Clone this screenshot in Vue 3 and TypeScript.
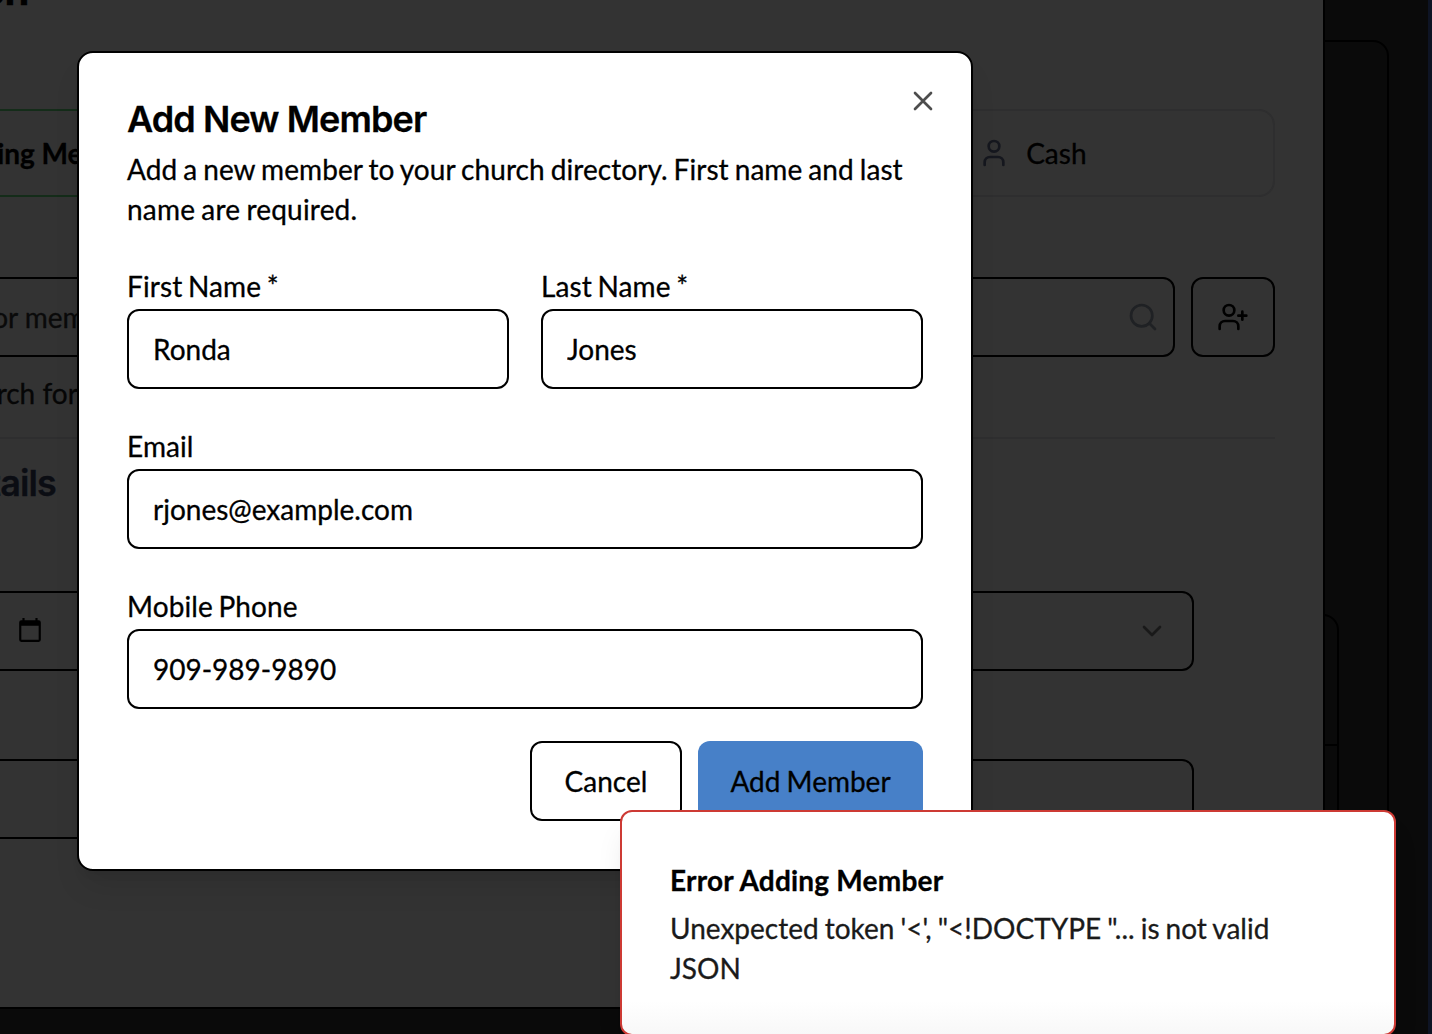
<script setup lang="ts">
import { ref } from 'vue'

const firstName = ref('Ronda')
const lastName = ref('Jones')
const email = ref('rjones@example.com')
const phone = ref('909-989-9890')
</script>

<template>
  <div class="screen">
    <div class="page-card">
      <div class="page-panel"><div class="panel-head"></div></div>
    </div>
    <div class="page-edge"></div>

    <section class="sheet">
      <h1 class="sheet-title">Add Donation</h1>
      <div class="tabs">
        <div class="tab active">
          <svg class="icon" viewBox="0 0 24 24"><circle cx="12" cy="7" r="4" /><path d="M19 21v-2a4 4 0 0 0-4-4H9a4 4 0 0 0-4 4v2" /></svg>
          <span>Existing Member</span>
        </div>
        <div class="tab"></div>
        <div class="tab cash">
          <svg class="icon muted" viewBox="0 0 24 24"><circle cx="12" cy="7" r="4" /><path d="M19 21v-2a4 4 0 0 0-4-4H9a4 4 0 0 0-4 4v2" /></svg>
          <span>Cash</span>
        </div>
      </div>
      <div class="search-row">
        <div class="box search">
          <span class="placeholder">Type to search for member</span>
          <svg class="icon faint" viewBox="0 0 24 24"><circle cx="11" cy="11" r="8" /><path d="m21 21-4.3-4.3" /></svg>
        </div>
        <button class="box add" aria-label="Add member">
          <svg class="icon" viewBox="0 0 24 24"><path d="M16 21v-2a4 4 0 0 0-4-4H6a4 4 0 0 0-4 4v2" /><circle cx="9" cy="7" r="4" /><path d="M19 8v6M22 11h-6" /></svg>
        </button>
      </div>
      <p class="hint">Type a name to search for</p>
      <div class="rule"></div>
      <h2 class="section-title">Donation Details</h2>
      <div class="fields">
        <div class="box date">
          <svg class="calendar" viewBox="0 0 24 24"><path d="M20 3h-1V1h-2v2H7V1H5v2H4a2 2 0 0 0-2 2v16a2 2 0 0 0 2 2h16a2 2 0 0 0 2-2V5a2 2 0 0 0-2-2zm0 18H4V8h16z" /></svg>
        </div>
        <div class="box select">
          <svg class="icon chevron" viewBox="0 0 24 24"><path d="m6 9 6 6 6-6" /></svg>
        </div>
        <div class="box"></div>
        <div class="box"></div>
      </div>
    </section>

    <form class="modal" @submit.prevent>
      <h2 class="modal-title">Add New Member</h2>
      <p class="modal-text">Add a new member to your church directory. First name and last <span class="wide">name are required.</span></p>
      <div class="name-row">
        <label class="field">First Name *<input v-model="firstName" type="text" /></label>
        <label class="field">Last Name *<input v-model="lastName" type="text" /></label>
      </div>
      <label class="field">Email<input v-model="email" type="text" /></label>
      <label class="field">Mobile Phone<input v-model="phone" type="text" /></label>
      <div class="actions">
        <button type="button" class="btn cancel">Cancel</button>
        <button type="submit" class="btn primary">Add Member</button>
      </div>
      <svg class="icon close" viewBox="0 0 24 24"><path d="M18 6 6 18M6 6l12 12" /></svg>
    </form>

    <aside class="toast">
      <strong>Error Adding Member</strong>
      <p>Unexpected token '&lt;', "&lt;!DOCTYPE "... is not valid JSON</p>
    </aside>
  </div>
</template>

<style>
body { margin: 0; overflow: hidden; }
</style>

<style scoped>
* { box-sizing: border-box; }
.screen {
  position: relative;
  width: 1432px;
  height: 1034px;
  overflow: hidden;
  background: #0a0a0a;
  color: #000;
  font: 400 28px/40px Lato, sans-serif;
  -webkit-text-stroke: 0.3px currentColor;
}
h1, h2, p { margin: 0; }
.icon {
  width: 32px;
  height: 32px;
  flex: none;
  fill: none;
  stroke: currentColor;
  stroke-width: 2;
  stroke-linecap: round;
  stroke-linejoin: round;
}

.page-card {
  position: absolute;
  left: -300px;
  top: 40px;
  width: 1689px;
  height: 1100px;
  padding: 572px 48px 0;
  border: 2px solid #000;
  border-radius: 16px;
}
.page-panel { height: 600px; border: 2px solid #000; border-radius: 16px; }
.panel-head { height: 130px; border-bottom: 2px solid #000; }
.page-edge { position: absolute; right: 0; top: 0; width: 4px; height: 100%; background: #0e1424; }

.sheet {
  position: absolute;
  left: -275px;
  top: -48px;
  width: 1600px;
  height: 1057px;
  padding: 13px 48px 0;
  border: 2px solid #000;
  background: #333;
}
.sheet-title { font: 700 40px/48px Inter, sans-serif; letter-spacing: -1px; }
.tabs { display: grid; grid-template-columns: repeat(3, 1fr); gap: 16px; margin-top: 94px; }
.tab {
  display: flex;
  align-items: center;
  justify-content: center;
  gap: 16px;
  height: 88px;
  border: 2px solid #2e2e2f;
  border-radius: 16px;
}
.active { padding-right: 4px; border-color: #142c19; font-weight: 700; }
.cash { padding-left: 4px; }
.muted { color: #15171e; }
.faint { color: #1f2124; }
.search-row { display: flex; gap: 16px; margin-top: 80px; }
.box {
  display: flex;
  align-items: center;
  height: 80px;
  padding: 0 24px;
  border: 2px solid #000;
  border-radius: 12px;
  background: transparent;
  color: #000;
}
.search { flex: 1; justify-content: space-between; padding-left: 20px; padding-right: 14px; }
.placeholder { color: #0a0a0a; }
.add { width: 84px; justify-content: center; padding: 0; }
.hint { margin: 16px 0 0 -14px; color: #060606; }
.rule { height: 2px; margin-top: 24px; background: #2e2e2f; }
.section-title { margin-top: 24px; padding-left: 10px; font: 600 36px/40px Inter, sans-serif; letter-spacing: -0.9px; color: #0b0d13; }
.fields { display: grid; grid-template-columns: 1fr 1fr; gap: 88px 32px; margin-top: 88px; padding-right: 81px; }
.date { padding-left: 240px; }
.select { justify-content: flex-end; }
.chevron { color: #191919; }
.calendar { width: 26px; height: 26px; margin-bottom: 2px; }

.modal {
  position: absolute;
  left: 77px;
  top: 51px;
  width: 896px;
  height: 820px;
  padding: 48px;
  display: flex;
  flex-direction: column;
  border: 2px solid #000;
  border-radius: 16px;
  background: #fff;
  box-shadow: 0 20px 30px -6px rgba(0, 0, 0, 0.1), 0 8px 12px -8px rgba(0, 0, 0, 0.1);
}
.modal-title { font: 600 36px/36px Inter, sans-serif; letter-spacing: -0.9px; }
.modal-text { margin-top: 12px; letter-spacing: 0.06px; word-spacing: -1.2px; }
.wide { letter-spacing: 0.2px; }
.name-row { display: grid; grid-template-columns: 1fr 1fr; gap: 32px; }
.field { display: block; margin-top: 37px; letter-spacing: 0.1px; word-spacing: -1.6px; }
.field input {
  display: block;
  width: 100%;
  height: 80px;
  margin-top: 3px;
  padding: 0 24px;
  border: 2px solid #000;
  border-radius: 12px;
  background: #fff;
  color: #000;
  font: inherit;
  outline: none;
}
.actions { display: flex; justify-content: flex-end; gap: 16px; margin-top: 32px; }
.btn { height: 80px; padding: 0 32px; border: 2px solid #000; border-radius: 12px; background: #fff; color: #000; font: inherit; }
.cancel { width: 152px; }
.primary { width: 225px; border: 0; background: #4780c8; word-spacing: -1px; }
.close { position: absolute; right: 32px; top: 32px; color: #4d4d4d; }

.toast {
  position: absolute;
  left: 620px;
  top: 810px;
  width: 776px;
  height: 226px;
  padding: 48px 100px 0 48px;
  border: 2px solid #cd3a34;
  border-radius: 12px;
  background: linear-gradient(#fff 85%, #f8f8f8);
  box-shadow: 0 20px 30px -6px rgba(0, 0, 0, 0.1), 0 8px 12px -8px rgba(0, 0, 0, 0.1);
}
.toast strong { display: block; font-weight: 700; letter-spacing: 0.22px; }
.toast p { margin-top: 8px; color: #1a1a1a; word-spacing: -1.1px; }
</style>
